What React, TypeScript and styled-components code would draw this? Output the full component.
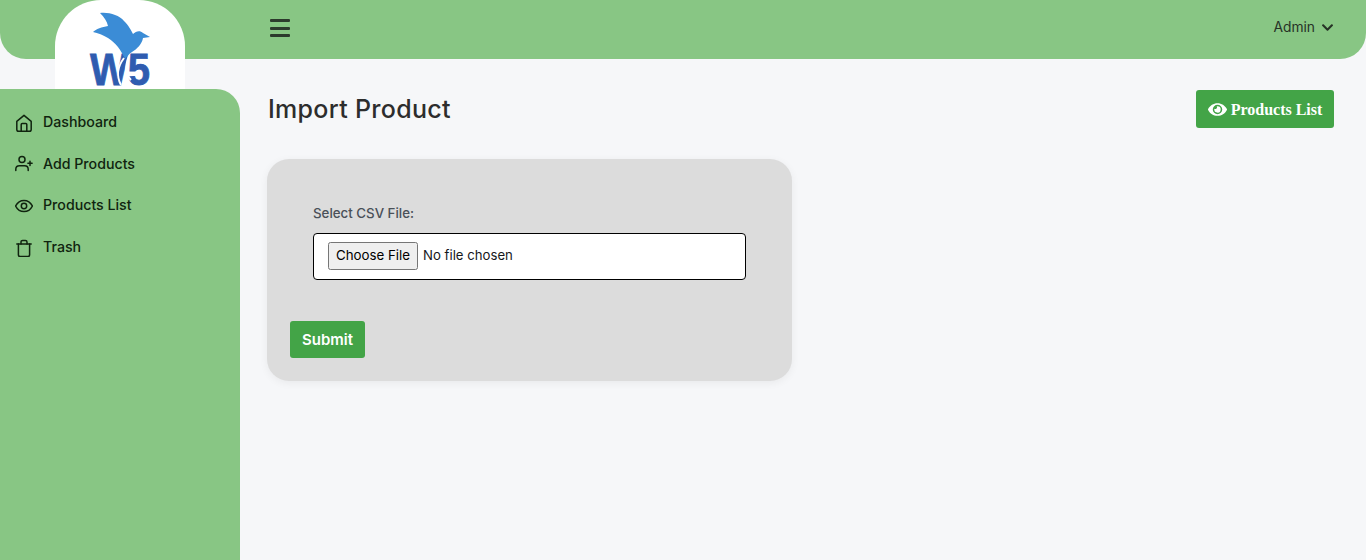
import styled, { createGlobalStyle } from "styled-components"
import { FaEye, FaChevronDown } from "react-icons/fa"

const GlobalStyle = createGlobalStyle`
  html, body { margin: 0; padding: 0; height: 100%; }
  body { background: #f6f7f9; font-family: Inter, "Liberation Sans", sans-serif; overflow: hidden; }
  #root { height: 100%; }
  * { box-sizing: border-box; }
`

const navItems = [
  { label: "Dashboard", icon: "home" },
  { label: "Add Products", icon: "user" },
  { label: "Products List", icon: "eye" },
  { label: "Trash", icon: "trash" },
]

function NavIcon({ name }: { name: string }) {
  return (
    <svg width="18" height="18" viewBox="0 0 18 18" fill="none" stroke="#10240f" strokeWidth="1.5" strokeLinecap="round" strokeLinejoin="round">
      {name === "home" && (
        <>
          <path d="M1.800 7.400 9 1.400l7.200 6v8a1.800 1.800 0 0 1-1.800 1.800H3.600a1.800 1.800 0 0 1-1.800-1.800v-8Z" />
          <path d="M6.200 17V10.400a1 1 0 0 1 1-1h3.600a1 1 0 0 1 1 1V17" />
        </>
      )}
      {name === "user" && (
        <>
          <circle cx="7" cy="4.400" r="3" />
          <path d="M.8 15.500v-1.200c0-2.100 1.600-3.500 3.600-3.500h5.200c2 0 3.600 1.400 3.600 3.500v1.200" />
          <path d="M15 6.200v4.200M12.900 8.300h4.200" />
        </>
      )}
      {name === "eye" && (
        <>
          <path d="M.6 9C2.500 5.300 5.400 3.400 9 3.400s6.500 1.900 8.400 5.600c-1.900 3.700-4.800 5.600-8.400 5.600S2.500 12.700.6 9Z" />
          <circle cx="9" cy="9" r="2.700" />
        </>
      )}
      {name === "trash" && (
        <>
          <path d="M1.800 5h14.400" />
          <path d="M6 5V3c0-.9.700-1.600 1.600-1.600h2.800c.9 0 1.600.7 1.600 1.600v2" />
          <path d="M3.400 5v10.800c0 1 .7 1.800 1.700 1.800h7.800c1 0 1.700-.8 1.700-1.800V5" />
        </>
      )}
    </svg>
  )
}

function BrandLogo() {
  return (
    <svg width="130" height="100" viewBox="0 0 130 100">
      <text x="65" y="85" textAnchor="middle" fontFamily="Liberation Sans, sans-serif" fontWeight="700" fontSize="44" fill="#2f5cb0" stroke="#2f5cb0" strokeWidth="0.8" textLength="60" lengthAdjust="spacingAndGlyphs">W5</text>
      <path
        fill="#3b8cd6"
        d="M45 13C54 12 64 15 69 21 74 26 76 30 78 34 81 31 85 30 88 33L95 37 88 38C87 44 82 49 77 52 74 54 72 56 70 59 66 50 61 43 53 38 48 35 43 33 38 32 41 29 47 27 53 26 52 21 49 17 45 13Z"
      />
      <path fill="none" stroke="#fff" strokeWidth="2" d="M69 58C63 66 61 76 66 85M74 56C70 66 70 74 76 80" />
    </svg>
  )
}

export default function App() {
  return (
    <Page>
      <GlobalStyle />
      <TopBar>
        <LogoTile>
          <BrandLogo />
        </LogoTile>
        <MenuToggle aria-label="Toggle menu">
          <span />
          <span />
          <span />
        </MenuToggle>
        <UserMenu>
          Admin <FaChevronDown size={13} />
        </UserMenu>
      </TopBar>
      <Body>
        <Sidebar>
          {navItems.map((item) => (
            <NavLink key={item.label}>
              <NavIcon name={item.icon} />
              <span>{item.label}</span>
            </NavLink>
          ))}
        </Sidebar>
        <Main>
          <TitleRow>
            <Title>Import Product</Title>
            <ListButton>
              <FaEye size={19} /> <span>Products List</span>
            </ListButton>
          </TitleRow>
          <Card>
            <FieldGroup>
              <FieldLabel>Select CSV File:</FieldLabel>
              <FileInput type="file" />
            </FieldGroup>
            <SubmitButton>Submit</SubmitButton>
          </Card>
        </Main>
      </Body>
    </Page>
  )
}

const Page = styled.div`
  height: 100vh;
  display: flex;
  flex-direction: column;
  background: #f6f7f9;
`

const TopBar = styled.header`
  height: 59px;
  flex-shrink: 0;
  position: relative;
  display: flex;
  align-items: center;
  justify-content: space-between;
  padding: 0 32px 3px 270px;
  background: #88c684;
  border-radius: 0 0 26px 26px;
`

const LogoTile = styled.div`
  position: absolute;
  left: 55px;
  top: 0;
  width: 130px;
  height: 100px;
  background: #fff;
  border-radius: 46px 46px 0 0;
`

const MenuToggle = styled.button`
  width: 20px;
  height: 18px;
  padding: 0;
  border: 0;
  background: none;
  display: flex;
  flex-direction: column;
  justify-content: space-between;

  span {
    display: block;
    height: 3px;
    border-radius: 1px;
    background: #2c3a2c;
  }
`

const UserMenu = styled.div`
  display: flex;
  align-items: center;
  gap: 6px;
  margin-bottom: 2px;
  font-size: 13.800px;
  color: #263226;
`

const Body = styled.div`
  flex: 1;
  display: flex;
  min-height: 0;
`

const Sidebar = styled.nav`
  position: relative;
  width: 240px;
  margin-top: 30px;
  flex-shrink: 0;
  padding-top: 12px;
  background: #88c684;
  border-radius: 0 24px 0 0;
`

const NavLink = styled.a`
  height: 41.6px;
  display: flex;
  align-items: center;
  gap: 10px;
  padding-left: 15px;
  font-size: 14.2px;
  font-weight: 500;
  color: #10240f;

  svg {
    margin-top: 2px;
  }
`

const Main = styled.main`
  flex: 1;
  padding: 31px 32px 0 28px;
`

const TitleRow = styled.div`
  height: 38px;
  display: flex;
  align-items: center;
  justify-content: space-between;
`

const Title = styled.h1`
  margin: 0;
  font-size: 25px;
  font-weight: 500;
  letter-spacing: 0.3px;
  color: #2d2d2d;
`

const ListButton = styled.button`
  width: 138px;
  height: 38px;
  padding: 2px 0 0;
  display: flex;
  align-items: center;
  justify-content: center;
  gap: 4px;
  border: 0;
  border-radius: 3px;
  background: #43a447;
  color: #fff;
  font-family: "Liberation Serif", serif;
  font-size: 16px;
  font-weight: 700;

  svg {
    margin-top: -2px;
  }
`

const Card = styled.section`
  width: 525px;
  height: 222px;
  margin: 31px 0 0 -1px;
  padding: 23px;
  background: #dcdcdc;
  border-radius: 22px;
  box-shadow: 0 2px 8px rgba(0, 0, 0, 0.06);
`

const FieldGroup = styled.div`
  padding: 23px 23px 0;
  display: flex;
  flex-direction: column;
`

const FieldLabel = styled.label`
  margin-bottom: 12px;
  font-size: 13.3px;
  font-weight: 500;
  color: #4a5058;
`

const FileInput = styled.input`
  height: 47px;
  padding: 8px 14px;
  background: #fff;
  border: 1px solid #000;
  border-radius: 4px;
  font-family: Inter, "Liberation Sans", sans-serif;
  font-size: 13.2px;
  color: #16181c;

  &::file-selector-button {
    height: 28px;
    width: 90px;
    padding: 0 0 2px;
    margin-right: 5px;
    font-family: Inter, "Liberation Sans", sans-serif;
    font-size: 13.3px;
  }
`

const SubmitButton = styled.button`
  width: 75px;
  height: 37px;
  margin-top: 41px;
  padding: 0;
  border: 0;
  border-radius: 3px;
  background: #43a447;
  color: #fff;
  font-family: Inter, "Liberation Sans", sans-serif;
  font-size: 15px;
  font-weight: 600;
`
